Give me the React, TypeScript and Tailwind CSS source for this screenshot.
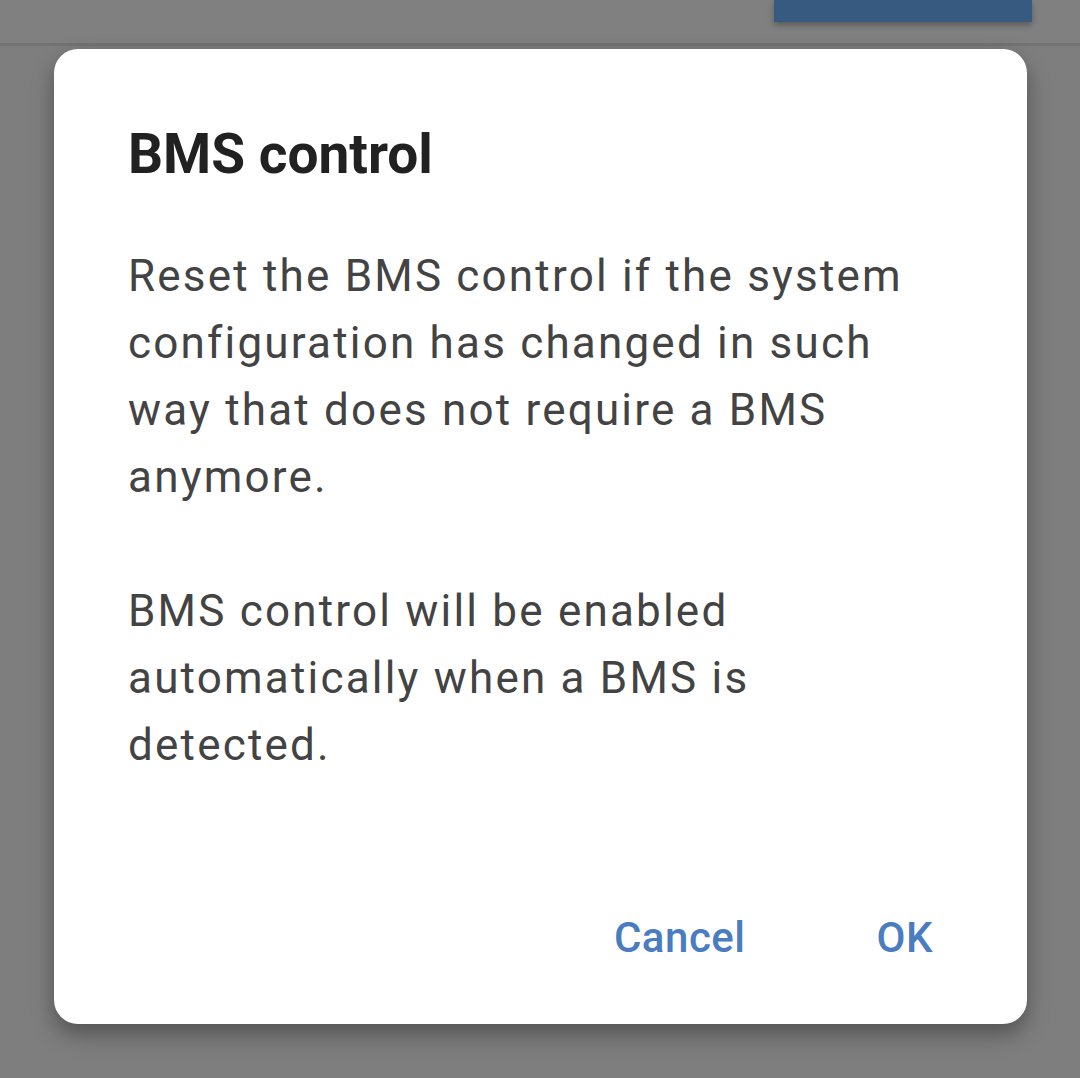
export default function App() {
  return (
    <main className="w-full min-h-[1078px] h-[1078px] bg-[#7e7e7e] overflow-hidden flex flex-col" style={{ fontFamily: "Roboto, 'Noto Sans', sans-serif" }}>
      {/* top bar behind scrim */}
      <div className="h-[43px] bg-[#808080] flex justify-end pr-[48px]">
        <div className="w-[258px] h-[22px] bg-[#365a80] shadow-[0_3px_6px_rgba(0,0,0,0.3)]" />
      </div>
      <div className="h-[3px] bg-[#737373]" />

      {/* dialog */}
      <div className="mt-[3px] ml-[54px] w-[973px] h-[975px] bg-white rounded-[24px] shadow-[0_10px_22px_rgba(0,0,0,0.35)] flex flex-col pl-[74px] pr-[70px] pt-[73px]">
        <h2 className="text-[55px] leading-[64px] font-bold text-[#212121]">BMS control</h2>
        <div className="mt-[57px] text-[44px] leading-[67px] tracking-[2.2px] text-[#434343] pr-[21px]">
          <p>Reset the BMS control if the system configuration has changed in such way that does not require a BMS anymore.</p>
          <p className="mt-[67px]">BMS control will be enabled automatically when a BMS is detected.</p>
        </div>
        <div className="mt-auto mb-[58px] flex justify-end items-center gap-[83px]">
          <button className="px-[24px] h-[60px] text-[42px] tracking-[0.5px] font-medium text-[#4a7dc0]">Cancel</button>
          <button className="px-[24px] h-[60px] text-[42px] tracking-[0.5px] font-medium text-[#4a7dc0]">OK</button>
        </div>
      </div>
    </main>
  );
}
